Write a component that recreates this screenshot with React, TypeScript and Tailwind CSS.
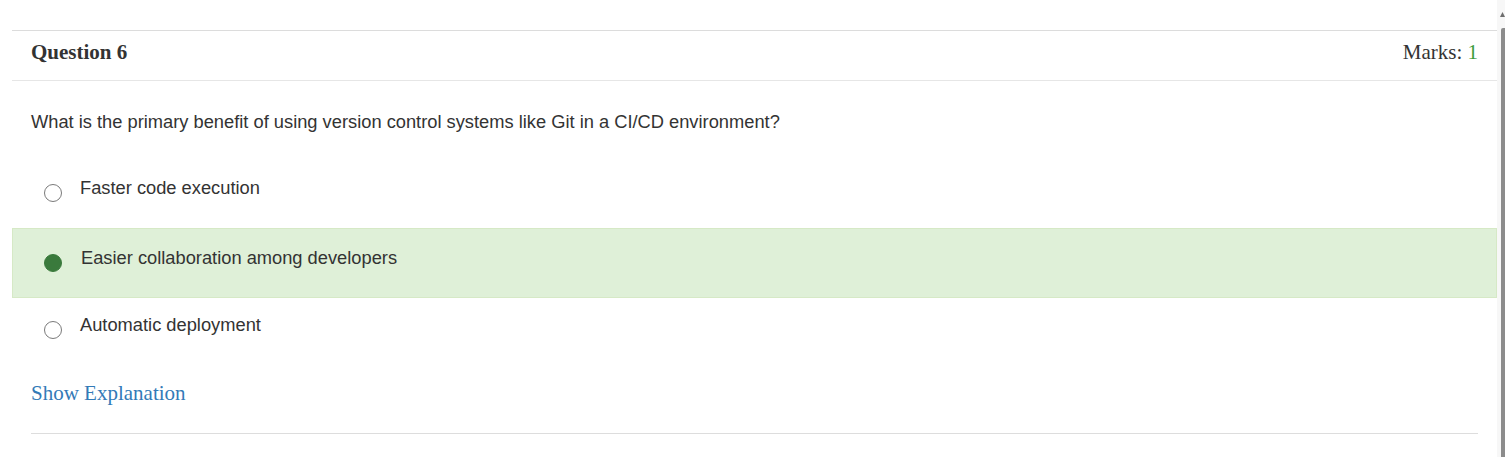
import React from "react";

const options = [
  { text: "Faster code execution", selected: false },
  { text: "Easier collaboration among developers", selected: true },
  { text: "Automatic deployment", selected: false },
];

export default function App() {
  return (
    <div className="relative w-[1505px] h-[457px] bg-white overflow-hidden">
      <div className="pl-[12px] pr-[8px] pt-[30px]">
        <div className="border-t border-[#dcdcdc]">
          <div className="h-[50px] border-b border-[#e6e6e6] px-[19px] pb-[6px] flex items-center justify-between text-[21px] text-[#333] [font-family:'Liberation_Serif',serif]">
            <span className="font-bold">Question 6</span>
            <span>
              Marks: <span className="text-[#3c9c3c]">1</span>
            </span>
          </div>
          <div className="px-[19px] pt-[30px] pb-[27px] text-[18.3px] leading-[22px] text-[#333] [font-family:'Liberation_Sans',Arial,sans-serif]">
            What is the primary benefit of using version control systems like Git in a CI/CD environment?
          </div>
          {options.map((o, i) =>
            o.selected ? (
              <div
                key={i}
                className="h-[70px] border border-[#d6e9c6] bg-[#dff0d8] pl-[31px] pt-[18px] flex items-start gap-[19px]"
              >
                <span className="mt-[7px] w-[18px] h-[18px] rounded-full bg-[#3a7a3c] border border-[#3a7a3c] shrink-0" />
                <span className="text-[18.3px] leading-[22px] text-[#333] [font-family:'Liberation_Sans',Arial,sans-serif]">
                  {o.text}
                </span>
              </div>
            ) : (
              <div
                key={i}
                className={`h-[68px] pl-[32px] flex items-start gap-[18px] ${i === 0 ? "pt-[17px]" : "pt-[16px]"}`}
              >
                <span className="mt-[7px] w-[18px] h-[18px] rounded-full bg-white border border-[#7a7a7a] shrink-0" />
                <span className="text-[18.3px] leading-[22px] text-[#333] [font-family:'Liberation_Sans',Arial,sans-serif]">
                  {o.text}
                </span>
              </div>
            )
          )}
          <div className="px-[19px] pt-[15px]">
            <a className="text-[21px] leading-[24px] text-[#337ab7] [font-family:'Liberation_Serif',serif] cursor-pointer">
              Show Explanation
            </a>
          </div>
          <div className="mx-[19px] mt-[27px] border-t border-[#dddddd]" />
        </div>
      </div>
      <div className="absolute right-0 top-0 w-[8px] h-full bg-[#f7f7f7]">
        <svg className="absolute left-[3px] top-[12px]" width="5" height="6" viewBox="0 0 5 6">
          <path d="M2.5 0 L5 5 L0 5 Z" fill="#6e6e6e" />
        </svg>
        <div className="absolute left-[4px] right-0 top-[28px] bottom-0 bg-[#8c8c8c] rounded-tl-[2px]" />
      </div>
    </div>
  );
}
